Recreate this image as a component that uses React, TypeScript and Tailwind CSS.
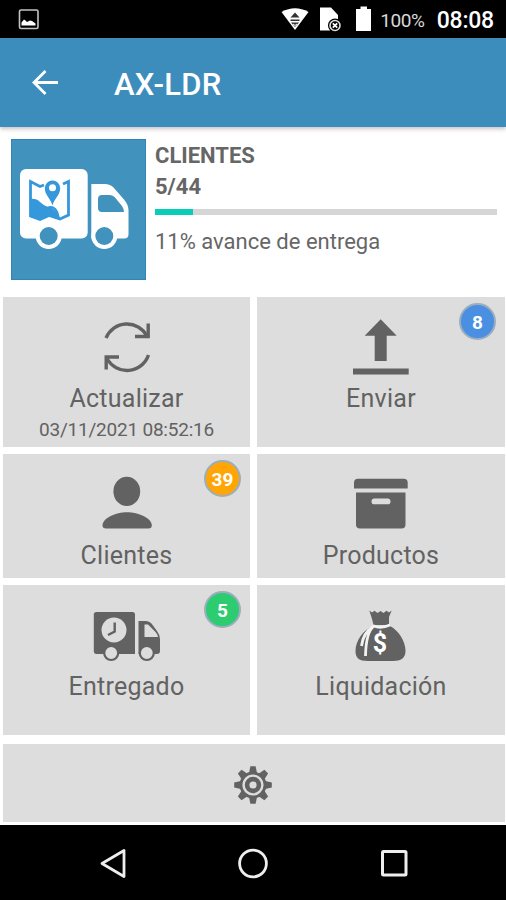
import { ReactNode } from "react";

const INK = "#626262";
const TILE = "#dddddd";

function StatusBar() {
  return (
    <div className="flex h-[38px] items-center bg-black pr-3 pl-[18px] text-white">
      <svg width="22" height="22" viewBox="0 0 22 22">
        <rect x="1.5" y="2" width="18.5" height="18.5" rx="1.5" fill="none" stroke="#c4c4c4" strokeWidth="1.6" />
        <path d="M3.5 17.5V14.5L6 11.5L7.5 12.5L9 14L12 12.5L14 13L17.5 15.5V17.5Z" fill="#fff" />
      </svg>

      <svg className="ml-[241px]" width="28" height="26" viewBox="0 0 28 26">
        <path d="M0.5 6Q14-1.5 27.5 6L14 24Z" fill="#fff" />
        <path d="M9.5 11.5L14 6.5L18.5 11.5ZM9.5 13.5H18.5V15H9.5ZM10 16.5L14 21L18 16.5Z" fill="#333" />
        <path d="M12 18L14 19.5L16 18" stroke="#fff" strokeWidth="1" fill="none" />
      </svg>
      <svg className="ml-[11px]" width="24" height="26" viewBox="0 0 24 26">
        <path d="M0 1.5H11L18 9V24.5H0Z" fill="#fff" />
        <circle cx="15" cy="19.5" r="7" fill="#000" />
        <circle cx="15" cy="19.5" r="5" fill="none" stroke="#ddd" strokeWidth="1.6" />
        <path d="M12.8 17.3L17.2 21.7M17.2 17.3L12.8 21.7" stroke="#fff" strokeWidth="1.8" />
      </svg>
      <svg className="ml-[12px]" width="16" height="26" viewBox="0 0 16 26">
        <path d="M4.5 0.5H11V3H15V25H0V3H4.5Z" fill="#fff" />
      </svg>
      <span className="ml-auto pt-[2px] text-[19px] leading-none tracking-[-0.4px] text-[#d8d8d8]">100%</span>
      <span className="ml-3 pt-[2px] text-[23px] leading-none font-medium tracking-[-0.2px]">08:08</span>
    </div>
  );
}

function AppBar() {
  return (
    <header className="relative flex h-[89px] items-center bg-[#3d8dbc] pl-8 text-white shadow-[0_2px_4px_rgba(80,50,50,0.3)]">
      <svg width="27" height="26" viewBox="0 0 27 26">
        <path d="M26 12.5H2M13.5 1L2 12.5L13.5 24" fill="none" stroke="#fff" strokeWidth="2.8" />
      </svg>
      <h1 className="ml-[55px] pt-[3px] text-[31px] leading-none font-medium tracking-[0.3px]">AX-LDR</h1>
    </header>
  );
}

function RouteTruck() {
  return (
    <svg width="135" height="141" viewBox="0 0 135 141" className="shrink-0 bg-[#4292be]">
      <rect x="0.5" y="0.5" width="134" height="140" fill="none" stroke="#2f86b5" />
      <rect x="9" y="30" width="67.7" height="69.5" rx="6" fill="#fff" />
      <path d="M80.3 45H94Q99 45 102.5 48.5L113 60.5Q117.5 66 117.5 71V95Q117.5 99.5 113 99.5H80.3Z" fill="#fff" />
      <path d="M91 56H99Q102 56 104 58.5L111 67Q113 70 113 73H91Q87 73 87 69V60Q87 56 91 56Z" fill="#4292be" />
      <circle cx="37.7" cy="97" r="13" fill="#fff" />
      <circle cx="37.7" cy="97" r="9" fill="#4292be" />
      <circle cx="93.3" cy="97" r="13" fill="#fff" />
      <circle cx="93.3" cy="97" r="9" fill="#4292be" />
      {/* folded map with a pin */}
      <path d="M33 46L29 47.5L19.5 42.5V77L29 80.5L38 76.5L49 80L57.5 76V42.5L52 45" fill="none" stroke="#3498db" strokeWidth="2.8" />
      <path d="M19 60Q25 59 29 63Q33 67 38 68.5Q44 69 46 75L48 80L38 77L29 81L19 77Z" fill="#3498db" />
      <path d="M36 69Q43 66 46 73L48 80" fill="none" stroke="#3498db" strokeWidth="2.4" />
      <path d="M41.5 66.5C40 60 33.8 56 33.8 49.2A7.7 7.7 0 0 1 49.2 49.2C49.2 56 43 60 41.5 66.5Z" fill="#3498db" />
      <circle cx="41.5" cy="48.8" r="3.5" fill="#fff" />
    </svg>
  );
}

function Summary() {
  return (
    <section className="flex h-[170px] pt-3 pr-[9px] pl-[11px]">
      <RouteTruck />
      <div className="ml-[9px] flex-1 text-[#666]">
        <p className="pt-1 text-[22px] leading-[26px] font-bold">CLIENTES</p>
        <p className="mt-[5px] text-[22px] leading-[26px] font-bold">5/44</p>
        <div className="mt-[9px] h-[6px] bg-[#d6d6d6]">
          <div className="h-full w-[11%] bg-[#0acdb8]" />
        </div>
        <p className="mt-[14px] text-[22px] leading-[26px]">11% avance de entrega</p>
      </div>
    </section>
  );
}

function Icon({ children }: { children: ReactNode }) {
  return (
    <svg width="72" height="60" viewBox="0 0 72 60" fill={INK}>
      {children}
    </svg>
  );
}

function Badge({ className, children }: { className: string; children: ReactNode }) {
  return (
    <span
      className={`absolute top-[6px] right-[9px] flex size-[37px] items-center justify-center rounded-full border-2 border-[#9aaebf] pt-px text-[19px] leading-none font-bold text-white ${className}`}
    >
      {children}
    </span>
  );
}

function Tile({ label, icon, note, badge }: { label: string; icon: ReactNode; note?: string; badge?: ReactNode }) {
  return (
    <button className="relative flex flex-col items-center bg-[#dddddd] pt-5 text-[#626262]">
      {icon}
      <span className="mt-2 text-[25px] leading-[28px] tracking-[0.25px]">{label}</span>
      {note && <span className="mt-[6px] text-[19px] leading-[22px] tracking-[-0.22px]">{note}</span>}
      {badge}
    </button>
  );
}

const refreshIcon = (
  <Icon>
    <g fill="none" stroke={INK} strokeWidth="3.4">
      <path d="M15 21A22.7 22.7 0 0 1 56 19" />
      <path d="M57.2 6.5V19.5H44" />
      <path d="M57.5 38A22.7 22.7 0 0 1 16 41.5" />
      <path d="M15.2 52.5V40H28" />
    </g>
  </Icon>
);

const uploadIcon = (
  <Icon>
    <path d="M35.7 2.3L51.7 18.7H41.7V44H29.7V18.7H19.7Z" />
    <rect x="8" y="51.5" width="55.7" height="6" />
  </Icon>
);

const personIcon = (
  <Icon>
    <ellipse cx="35.8" cy="17.4" rx="13.4" ry="14.6" />
    <path d="M11.5 51.5C11.5 44 25 38.3 36 38.3S60.8 44 60.8 51.5Q60.8 54.5 57.5 54.5H15Q11.5 54.5 11.5 51.5Z" />
  </Icon>
);

const boxIcon = (
  <Icon>
    <path d="M9 14.5V8.7Q9 4.7 13 4.7H58.7Q62.7 4.7 62.7 8.7V14.5Z" />
    <path d="M11 18.5H60.5V50.5Q60.5 54.5 56.5 54.5H15Q11 54.5 11 50.5Z" />
    <rect x="26.5" y="24.5" width="19" height="5.8" rx="2.9" fill={TILE} />
  </Icon>
);

const deliveryIcon = (
  <Icon>
    <path d="M5.5 7H41.5Q44 7 44 9.5V49H5.5Q2.8 49 2.8 46V9.5Q2.8 7 5.5 7Z" />
    <path d="M47.5 16H55Q58.5 16 60.5 18.5L66 26Q69 30 69 34V46Q69 49 66 49H47.5Z" />
    <path d="M53.5 19.5H57L64.5 27Q66.8 29.5 66.8 32H53.5Z" fill={TILE} />
    <circle cx="23" cy="25" r="12.5" fill={TILE} />
    <path d="M23.7 17.5V26.5L17 30" fill="none" stroke={INK} strokeWidth="2.4" />
    <circle cx="20.2" cy="48" r="7" fill={TILE} stroke={INK} strokeWidth="2.2" />
    <circle cx="55.8" cy="48" r="7" fill={TILE} stroke={INK} strokeWidth="2.2" />
  </Icon>
);

const moneyBagIcon = (
  <Icon>
    <path d="M24.3 5.5L27 7.5L29.5 5.8L32.5 8L35.5 6L38.5 8L41.5 5.8L44 7.5L46.7 5.5L44 12V20H28.5L27 14Z" />
    <path d="M28 21H45C53 25 60.7 36 60.5 46C60.5 53 56 56 48 56H23C14 56 10.5 53 10.5 46C10.5 36 18 25 28 21Z" />
    <path d="M45 20Q36 24 29 21Q21 27 20.5 51M28 21.5Q18 28 16.5 41" fill="none" stroke="#f2f2f2" strokeWidth="2.8" />
    <text x="35" y="46.5" textAnchor="middle" fontSize="25" fontWeight="700" fill="#fff">$</text>
  </Icon>
);

function Gear() {
  return (
    <svg width="40" height="40" viewBox="-20 -20 40 40" fill={INK}>
      {[0, 45, 90, 135, 180, 225, 270, 315].map((angle) => (
        <path key={angle} d="M-4.2-11L-2.6-18.8H2.6L4.2-11Z" transform={`rotate(${angle})`} />
      ))}
      <circle r="13.4" />
      <circle r="9.4" fill="none" stroke={TILE} strokeWidth="2.4" />
      <circle r="3.6" fill={TILE} />
    </svg>
  );
}

function NavBar() {
  return (
    <nav className="flex h-[75px] items-center justify-between bg-black pr-[97px] pl-[98px]">
      <svg width="30" height="32" viewBox="0 0 30 32">
        <path d="M4 16.5L26 3.5V29.5Z" fill="none" stroke="#eee" strokeWidth="2.8" strokeLinejoin="round" />
      </svg>
      <svg width="32" height="32" viewBox="0 0 32 32">
        <circle cx="15" cy="16.5" r="13.4" fill="none" stroke="#eee" strokeWidth="2.8" />
      </svg>
      <svg width="30" height="32" viewBox="0 0 30 32">
        <rect x="3.5" y="4.5" width="23.5" height="23.5" rx="1" fill="none" stroke="#eee" strokeWidth="3" />
      </svg>
    </nav>
  );
}

export default function App() {
  return (
    <div className="h-[900px] w-[506px] overflow-hidden bg-white font-[Roboto,sans-serif]">
      <StatusBar />
      <AppBar />
      <Summary />

      <main className="grid grid-cols-[247px_248px] grid-rows-[150px_124px_150px] gap-[7px] pl-[3px]">
        <Tile label="Actualizar" note="03/11/2021 08:52:16" icon={refreshIcon} />
        <Tile label="Enviar" icon={uploadIcon} badge={<Badge className="bg-[#4a8fe2]">8</Badge>} />
        <Tile label="Clientes" icon={personIcon} badge={<Badge className="bg-[#ffa505]">39</Badge>} />
        <Tile label="Productos" icon={boxIcon} />
        <Tile label="Entregado" icon={deliveryIcon} badge={<Badge className="bg-[#2ecc71]">5</Badge>} />
        <Tile label="Liquidación" icon={moneyBagIcon} />
      </main>

      <button className="mt-[9px] mb-[3px] ml-[3px] flex h-[78px] w-[502px] items-center justify-center bg-[#dddddd] pt-1 pr-[2px]">
        <Gear />
      </button>
      <NavBar />
    </div>
  );
}
